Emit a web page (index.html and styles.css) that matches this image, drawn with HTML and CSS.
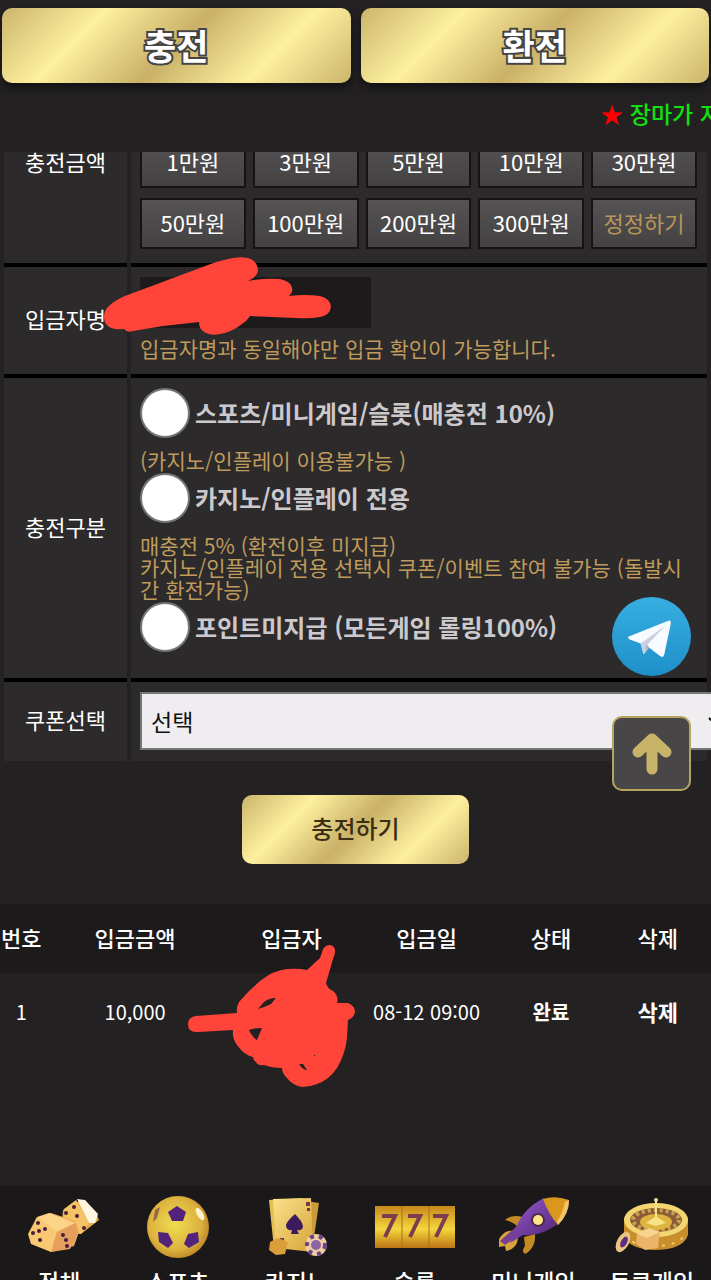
FILE: index.html
```html
<!DOCTYPE html>
<html lang="ko">
<head>
    <meta charset="UTF-8">
    <meta name="viewport" content="width=device-width, initial-scale=1.0">
    <title>충전</title>
    <link rel="stylesheet" href="styles.css">
</head>
<body>

    <header class="tabs">
        <button type="button" class="gold tab">충전</button>
        <button type="button" class="gold tab">환전</button>
    </header>

    <div class="notice">
        <p><span class="star">★</span> 장마가 지</p>
    </div>

    <main class="content">
        <form class="charge-form">
            <table class="form-table">
                <tr class="amount-row">
                    <th>충전금액</th>
                    <td>
                        <div class="amounts">
                            <button type="button">1만원</button>
                            <button type="button">3만원</button>
                            <button type="button">5만원</button>
                            <button type="button">10만원</button>
                            <button type="button">30만원</button>
                            <button type="button">50만원</button>
                            <button type="button">100만원</button>
                            <button type="button">200만원</button>
                            <button type="button">300만원</button>
                            <button type="button" class="reset">정정하기</button>
                        </div>
                    </td>
                </tr>
                <tr>
                    <th><label for="depositor">입금자명</label></th>
                    <td>
                        <div class="depositor">
                            <input type="text" id="depositor">
                            <svg class="scribble scribble-name" width="228" height="79" viewBox="0 0 228 79" aria-hidden="true">
                                <path fill="#ff453a" d="M0 60Q0 53 6 48Q14 41 29 36L96 11Q116 3 129 1Q140-1 147 2Q154 6 154 14Q153 20 144 24Q160 21 176 22Q190 25 188 35L185 39Q201 37 216 39Q227 42 227 50Q226 58 216 60Q206 62 192 61L146 59Q143 64 138 67Q128 75 116 77Q108 79 102 76Q95 73 95 65L59 69L29 74Q23 76 20 72Q6 73 3 68Q0 65 0 60Z"/>
                            </svg>
                        </div>
                        <p class="hint">입금자명과 동일해야만 입금 확인이 가능합니다.</p>
                    </td>
                </tr>
                <tr>
                    <th>충전구분</th>
                    <td class="kinds">
                        <label class="kind"><input type="radio" name="kind">스포츠/미니게임/슬롯(매충전 10%)</label>
                        <p class="hint">(카지노/인플레이 이용불가능 )</p>
                        <label class="kind"><input type="radio" name="kind">카지노/인플레이 전용</label>
                        <p class="hint">매충전 5% (환전이후 미지급)<br>카지노/인플레이 전용 선택시 쿠폰/이벤트 참여 불가능 (돌발시간 환전가능)</p>
                        <label class="kind"><input type="radio" name="kind">포인트미지급 (모든게임 롤링100%)</label>
                    </td>
                </tr>
                <tr>
                    <th><label for="coupon">쿠폰선택</label></th>
                    <td>
                        <div class="coupon">
                            <select id="coupon">
                                <option>선택</option>
                            </select>
                            <svg class="chevron" width="14" height="8" viewBox="0 0 14 8" aria-hidden="true">
                                <path d="M1 1l6 6 6-6" fill="none" stroke="#111" stroke-width="2"/>
                            </svg>
                        </div>
                    </td>
                </tr>
            </table>
            <button type="submit" class="gold submit">충전하기</button>
        </form>

        <table class="history">
            <thead>
                <tr>
                    <th class="col-no">번호</th>
                    <th class="col-amount">입금금액</th>
                    <th class="col-name">입금자</th>
                    <th class="col-date">입금일</th>
                    <th class="col-state">상태</th>
                    <th class="col-delete">삭제</th>
                </tr>
            </thead>
            <tbody>
                <tr>
                    <td>1</td>
                    <td>10,000</td>
                    <td class="masked">
                        <svg class="scribble scribble-row" width="167" height="142" viewBox="0 0 167 142" aria-hidden="true">
                            <path fill="#ff453a" fill-rule="evenodd" d="M142 0Q147 1 147 6Q147 10 145 14L138 38Q139 43 145 46Q151 51 149 58L160 58Q167 61 167 67Q166 73 160 75L159 93Q157 110 149 123Q141 135 129 139Q122 142 114 142Q104 140 99 133Q94 128 94 123Q84 123 76 120Q70 121 68 117Q65 115 65 112Q56 110 49 100Q44 93 45 85L10 87Q0 88 0 79Q0 72 8 71L49 68Q48 62 51 57L61 46L72 36Q86 25 99 24Q110 23 119 25L132 13Q134 8 135 4Q138 0 142 0ZM70 64Q77 62 83 59L88 53Q81 53 76 57ZM61 85Q66 83 74 83L69 95Q64 92 61 85ZM111 119Q115 125 119 125L115 119ZM126 110h1v1h-1z"/>
                        </svg>
                    </td>
                    <td>08-12 09:00</td>
                    <td class="strong">완료</td>
                    <td><button type="button" class="delete">삭제</button></td>
                </tr>
            </tbody>
        </table>
    </main>

    <div class="floating">
        <a href="#telegram" class="telegram" aria-label="Telegram">
            <svg viewBox="0 0 80 80">
                <defs>
                    <linearGradient id="tg" x1="0" y1="0" x2="0" y2="1">
                        <stop offset="0" stop-color="#37aee2"/>
                        <stop offset="1" stop-color="#1e90c8"/>
                    </linearGradient>
                </defs>
                <circle cx="40" cy="40" r="40" fill="url(#tg)"/>
                <path fill="#f7faff" d="M17 40L57 24Q60 23 59.500 27L53 58Q52 62 49 60L37 51 32 58 29 47 18 43Q15 41 17 40Z"/>
                <path fill="#c8d0e2" d="M29 47L54 29 36 48 32 58z"/>
                <path fill="#a9b4cc" d="M33 58l2-10 3 3z"/>
            </svg>
        </a>
        <a href="#top" class="to-top" aria-label="Top">
            <svg viewBox="0 0 40 42">
                <path d="M20 36V7M6 19L20 6l14 13" fill="none" stroke="#c8b468" stroke-width="11" stroke-linecap="round" stroke-linejoin="round"/>
            </svg>
        </a>
    </div>

    <nav class="menu">
        <a href="#all">
            <svg viewBox="0 0 80 62">
                <path fill="#e9a94e" d="M44 14L62 4 76 15 80 24 62 38 42 36z"/>
                <path fill="#f6c266" d="M45 13L57 4 70 27 62 38 44 32z"/>
                <path fill="#fff6e0" d="M58 3L66 4 79 18 76 27 70 27z"/>
                <path fill="#efae5c" d="M17 22L32 17 56 25 60 36 55 50 32 56 11 44z"/>
                <path fill="#fbd489" d="M18 21L30 17 56 27 38 36z"/>
                <path fill="#f8c873" d="M18 21L38 36 32 56 12 48 9 38z"/>
                <path fill="#e5a05d" d="M38 36L57 27 59 38 51 53 32 56z"/>
                <g fill="#4b1d3c">
                    <circle cx="19" cy="27" r="2"/><circle cx="26" cy="33" r="2"/><circle cx="20" cy="35" r="2"/><circle cx="14" cy="37" r="2"/><circle cx="21" cy="44" r="2"/>
                    <circle cx="44" cy="39" r="2"/><circle cx="47" cy="44" r="2"/><circle cx="48" cy="50" r="2"/>
                    <circle cx="55" cy="11" r="2"/><circle cx="47" cy="17" r="2"/><circle cx="58" cy="20" r="2"/><circle cx="65" cy="32" r="2"/>
                </g>
            </svg>
            <span>전체</span>
        </a>
        <a href="#sports">
            <svg viewBox="0 0 80 62">
                <defs>
                    <radialGradient id="ball" cx=".45" cy=".45" r=".6">
                        <stop offset="0" stop-color="#f0dc50"/>
                        <stop offset=".7" stop-color="#dcb23e"/>
                        <stop offset="1" stop-color="#b97f24"/>
                    </radialGradient>
                </defs>
                <circle cx="40" cy="31" r="31" fill="url(#ball)"/>
                <g fill="#53237c">
                    <path d="M39 10l9 6-3 9H34l-4-9z"/>
                    <path d="M20 36l10 1 5 10-5 5-9-6z"/>
                    <path d="M60 36l-10 2-4 10 5 4 10-6z"/>
                    <path d="M17 14l5-3-3 11-4 4z" fill="#9b6845"/>
                </g>
                <ellipse cx="62" cy="18" rx="3" ry="7" fill="#fff2c8" transform="rotate(-30 62 18)"/>
            </svg>
            <span>스포츠</span>
        </a>
        <a href="#casino">
            <svg viewBox="0 0 80 62">
                <defs>
                    <linearGradient id="card" x1="0" y1="0" x2="1" y2="1">
                        <stop offset="0" stop-color="#fbe28c"/>
                        <stop offset="1" stop-color="#d7a436"/>
                    </linearGradient>
                </defs>
                <path fill="#c99a35" d="M44 4l19 3-7 48-26-3z"/>
                <path fill="#e5bf52" d="M13 4l34-2 6 49-35 2z"/>
                <path fill="url(#card)" d="M17 3l38-1 2 54-37-4z"/>
                <path fill="#3d1b5e" d="M39 18q7 7 8 12 0 5-6 4l2 4h-8l1-4q-6 1-6-5 1-4 9-11z"/>
                <path fill="#713b46" d="M50 6h4v4h-4zM51 12h3v3h-3zM24 42h4v4h-4z"/>
                <path fill="#dc9e38" d="M14 46l8-4 10 4-3 12-9 1-7-5z"/>
                <circle cx="60" cy="49" r="11" fill="#f0cba0"/>
                <circle cx="60" cy="49" r="9" fill="none" stroke="#68428b" stroke-width="4" stroke-dasharray="4 5"/>
                <circle cx="60" cy="49" r="5" fill="#8c66a4"/>
            </svg>
            <span>카지노</span>
        </a>
        <a href="#slot">
            <svg viewBox="0 0 80 62">
                <defs>
                    <linearGradient id="reel" x1="0" y1="0" x2="0" y2="1">
                        <stop offset="0" stop-color="#c8871c"/>
                        <stop offset=".55" stop-color="#f4d63c"/>
                        <stop offset="1" stop-color="#bd7516"/>
                    </linearGradient>
                </defs>
                <path fill="url(#reel)" d="M0 10h80v42H0z"/>
                <path stroke="#a9701c" stroke-width="1" d="M27 10v42M54 10v42"/>
                <g fill="none" stroke="#7b3d50" stroke-width="4">
                    <path d="M7 20h13L10 41M33 20h12L35 41M58 20h13L61 41"/>
                </g>
            </svg>
            <span>슬롯</span>
        </a>
        <a href="#minigame">
            <svg viewBox="0 0 80 62">
                <defs>
                    <linearGradient id="rocket" x1="0" y1="0" x2="1" y2="1">
                        <stop offset="0" stop-color="#9b5bd0"/>
                        <stop offset="1" stop-color="#46206f"/>
                    </linearGradient>
                </defs>
                <path fill="#c48a24" d="M12 24q6-6 18-3l-4 12q-4-7-14-9z"/>
                <path fill="#c48a24" d="M31 41l11-3q1 14-10 20-4-3 0-8z"/>
                <path fill="#d9a33c" d="M6 43q6-10 15-8l4 7q-1 11-12 13l-1-5-6 1z"/>
                <path fill="#75408f" d="M7 45l18-16 6 6-19 14z"/>
                <path fill="url(#rocket)" d="M21 38Q27 14 51 2L69 25Q49 41 30 39L17 47z"/>
                <path fill="#d9981d" d="M50 3Q62-1 76 4q0 14-11 25Q56 19 50 3z"/>
                <path fill="#f0c46a" d="M76 4q0 14-11 25l-1-4q6-8 8-19z"/>
                <circle cx="45" cy="24" r="7" fill="#4a2a4e"/>
                <circle cx="45" cy="24" r="5" fill="#ffe58a"/>
            </svg>
            <span>미니게임</span>
        </a>
        <a href="#token">
            <svg viewBox="0 0 80 62">
                <path fill="#c98e2c" d="M12 22h64v17q-5 15-34 15-25-1-30-14z"/>
                <path stroke="#efd16e" stroke-width="2" stroke-dasharray="3 7" fill="none" d="M13 39q9 12 30 11 25 0 32-14"/>
                <ellipse cx="44" cy="24" rx="32" ry="17" fill="#f3d571"/>
                <ellipse cx="44" cy="24" rx="26" ry="12" fill="#8a5c38"/>
                <ellipse cx="44" cy="24" rx="23" ry="10" fill="none" stroke="#caa253" stroke-width="4" stroke-dasharray="3 3"/>
                <ellipse cx="44" cy="26" rx="16" ry="8" fill="#ddb440"/>
                <path fill="#f8e484" d="M43 5h2v16l9 6-10 3-10-3 9-6z"/>
                <circle cx="44" cy="4" r="2" fill="#f5dfa0"/>
                <path fill="#eab469" d="M25 38l12-6 11 4-2 16-13 2-9-6z"/>
                <path fill="#f8d38f" d="M25 38l12-6 11 4-13 6z"/>
                <ellipse cx="11" cy="46" rx="6" ry="11" fill="#edc383" transform="rotate(28 11 46)"/>
                <ellipse cx="12" cy="46" rx="3" ry="6" fill="#5c2d82" transform="rotate(28 12 46)"/>
            </svg>
            <span>토큰게임</span>
        </a>
    </nav>

</body>
</html>
```
FILE: styles.css
```css
* {
    box-sizing: border-box;
}

body {
    margin: 0;
    height: 100vh;
    display: flex;
    flex-direction: column;
    overflow: hidden;
    background-color: #232122;
    color: #fff;
    font-family: "Noto Sans CJK KR", "Noto Sans", sans-serif;
    font-size: 22px;
    line-height: 22px;
}

p {
    margin: 0;
}

button, input, select {
    font: inherit;
    color: inherit;
}

button {
    cursor: pointer;
    padding: 0;
}

.gold {
    border: none;
    border-radius: 10px;
    background: linear-gradient(135deg, #cbb56b, #fef09f 25%, #c9b167 50%, #fef09f 75%, #cbb56b);
}

/* 상단 탭 */
.tabs {
    display: flex;
    gap: 10px;
    padding: 8px 2px 0;
}

.tab {
    flex: 1;
    height: 75px;
    padding-bottom: 2px;
    font-size: 35px;
    font-weight: bold;
    color: #fff;
    -webkit-text-stroke: 4px #444;
    paint-order: stroke fill;
    box-shadow: 0 5px 10px rgba(0, 0, 0, 0.5);
}

.notice {
    flex: none;
    height: 69px;
    padding: 18px 0 0 calc(85% - 4px);
    overflow: hidden;
    white-space: nowrap;
    font-size: 23px;
    line-height: 24px;
    font-weight: 500;
    color: #12e012;
}

.star {
    color: #f00;
}

/* 충전 폼 */
.content {
    flex: 1;
    min-height: 0;
    overflow: hidden;
}

.charge-form {
    display: flex;
    flex-direction: column;
    align-items: center;
}

/* 스크롤된 위치 */
.form-table {
    width: 100%;
    margin-top: -89px;
    border-spacing: 4px 0;
}

.form-table th, .form-table td {
    border-bottom: 4px solid #000;
    background-color: #2c2a2b;
}

.form-table tr:last-child th, .form-table tr:last-child td {
    border-bottom: none;
}

.form-table th {
    width: 123px;
    padding: 0 0 5px;
    font-weight: normal;
}

.form-table td {
    padding: 10px 10px 13px 9px;
}

.form-table .amount-row td {
    height: 204px;
    padding-bottom: 14px;
    vertical-align: bottom;
}

.amounts {
    display: grid;
    grid-template-columns: repeat(5, 1fr);
    gap: 10px 7px;
}

.amounts button {
    height: 51px;
    padding-bottom: 4px;
    border: 2px solid #151314;
    background: linear-gradient(#555354, #434142);
}

.amounts .reset {
    color: #b8965a;
}

.depositor {
    position: relative;
    display: flex;
}

.depositor input {
    width: 231px;
    height: 51px;
    padding: 0 10px;
    border: none;
    background-color: #1c1a1b;
}

.hint {
    margin-bottom: 2px;
    font-size: 21px;
    color: #bf9b5c;
}

.depositor + .hint {
    margin-top: 9px;
}

.kind {
    display: flex;
    align-items: center;
    gap: 5px;
    margin-bottom: 11px;
    font-size: 24px;
    font-weight: bold;
    color: #ccc9cc;
}

.kind:last-child {
    margin-bottom: 13px;
}

.kind input {
    appearance: none;
    width: 50px;
    height: 50px;
    margin: 0;
    border: 2px solid #767676;
    border-radius: 50%;
    background-color: #fff;
}

.kind input:checked {
    border-width: 14px;
}

.form-table tr:last-child td {
    padding-bottom: 11px;
}

.coupon {
    position: relative;
    width: 106%;
}

.coupon select {
    display: block;
    appearance: none;
    width: 100%;
    height: 58px;
    padding: 0 9px;
    border: 2px solid #767676;
    border-radius: 0;
    background-color: #efedef;
    color: #111;
    font-size: 23px;
    line-height: 34px;
}

.chevron {
    position: absolute;
    right: 8px;
    top: 25px;
    pointer-events: none;
}

.submit {
    width: 32%;
    height: 69px;
    margin: 34px 0 40px;
    padding-bottom: 3px;
    font-size: 24px;
    font-weight: 500;
    color: #3a2f14;
}

/* 충전 내역 */
.history {
    width: 100%;
    table-layout: fixed;
    border-collapse: collapse;
    text-align: center;
}

.history th {
    height: 69px;
    padding: 0 0 4px;
    background-color: #1c1a1b;
    font-weight: 500;
    white-space: nowrap;
}

.history td {
    height: 80px;
    padding: 0 0 3px;
    font-size: 20px;
    white-space: nowrap;
}

.col-no {
    width: 6%;
}

.col-amount {
    width: 26%;
}

.col-name {
    width: 18%;
}

.col-date {
    width: 20%;
}

.col-state, .col-delete {
    width: 15%;
}

.history .strong {
    font-weight: bold;
}

.delete {
    border: none;
    background: none;
    font-size: 22px;
    font-weight: bold;
}

.masked {
    position: relative;
}

/* 손으로 가린 부분 */
.scribble {
    position: absolute;
    pointer-events: none;
}

.scribble-name {
    left: -36px;
    top: -20px;
}

.scribble-row {
    left: -40px;
    top: -28px;
}

/* 떠 있는 버튼 */
.floating {
    position: fixed;
    right: 20px;
    bottom: 489px;
    display: flex;
    flex-direction: column;
    gap: 40px;
}

.telegram svg {
    display: block;
    width: 79px;
    height: 79px;
}

.to-top {
    display: flex;
    align-items: center;
    justify-content: center;
    width: 79px;
    height: 75px;
    border: 2px solid #b7a360;
    border-radius: 10px;
    background-color: #484647;
}

.to-top svg {
    width: 40px;
    height: 42px;
}

/* 하단 메뉴 */
.menu {
    flex: none;
    display: flex;
    height: 94px;
    padding-top: 10px;
    overflow: hidden;
    background-color: #1a1818;
}

.menu a {
    flex: 1;
    display: flex;
    flex-direction: column;
    align-items: center;
    gap: 12px;
    color: #fff;
    font-size: 23px;
    font-weight: 500;
    text-decoration: none;
    white-space: nowrap;
}

.menu svg {
    width: 80px;
    height: 62px;
    flex: none;
}
```
